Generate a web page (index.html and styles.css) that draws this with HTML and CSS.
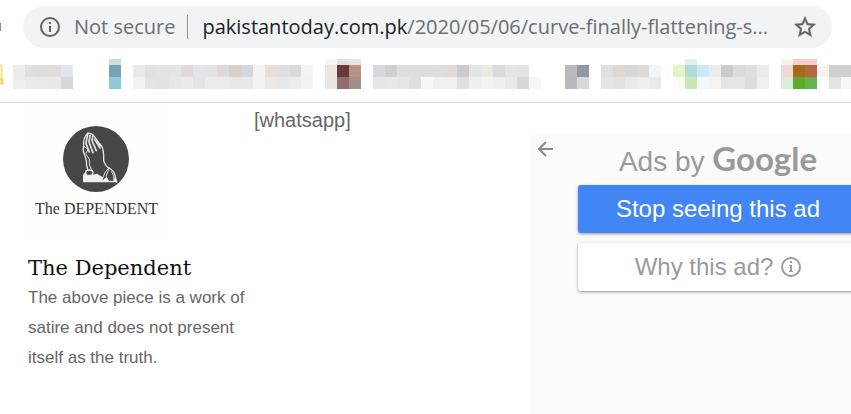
FILE: index.html
```html
<!DOCTYPE html>
<html lang="en">
  <head>
    <meta charset="UTF-8" />
    <meta name="viewport" content="width=device-width, initial-scale=1.0" />
    <title>The Dependent</title>
    <link rel="stylesheet" href="styles.css">
  </head>
  <body>
    <header class="browser">
      <div class="toolbar">
        <span class="edge"></span>
        <div class="omnibox">
          <button class="security" type="button">
            <svg width="22" height="22" viewBox="0 0 22 22" aria-hidden="true">
              <circle cx="11" cy="11" r="9" fill="none" stroke="#5f6368" stroke-width="2" />
              <path d="M10 10h2v6h-2zM10 6h2v2h-2z" fill="#5f6368" />
            </svg>
            Not secure
          </button>
          <div class="url" role="textbox" aria-label="Address" contenteditable="true" spellcheck="false"><span class="host">pakistantoday.com.pk</span>/2020/05/06/curve-finally-flattening-s...</div>
          <button class="star" type="button" aria-label="Bookmark this page">
            <svg width="26" height="26" viewBox="0 0 24 24" aria-hidden="true">
              <path d="M22 9.24l-7.19-.62L12 2 9.19 8.63 2 9.24l5.46 4.73L5.82 21 12 17.27 18.18 21l-1.63-7.03L22 9.24zM12 15.4l-3.76 2.27 1-4.28-3.32-2.88 4.38-.38L12 6.1l1.71 4.04 4.38.38-3.32 2.88 1 4.28L12 15.4z" fill="#5f6368" stroke="#5f6368" stroke-width=".3" />
            </svg>
          </button>
        </div>
      </div>
      <nav class="bookmarks" aria-label="Bookmarks">
        <svg class="folder" width="4" height="30" viewBox="0 0 4 30" aria-hidden="true">
          <path d="M0 6h2v16H0" fill="#fff3c4" stroke="#f9d56e" />
          <path d="M0 20h3v5H0" fill="#fbe28e" stroke="#f6c945" />
        </svg>
      </nav>
    </header>

    <main class="page">
      <section class="author">
        <svg class="logo" width="135" height="135" viewBox="0 0 135 135" role="img" aria-label="The Dependent">
          <rect width="135" height="135" fill="#fefefe" />
          <circle cx="68" cy="54" r="33" fill="#474747" />
          <g transform="translate(27 15) scale(.3333)" fill="none" stroke="#e4e4e4" stroke-width="4" stroke-linecap="round" stroke-linejoin="round">
            <path d="M84 187v-22l10-13 12 14 20-5 16 10 41 4v12z" fill="#f0f0f0" stroke="none" />
            <path d="M98 40q-14 14-12 36-4 16 3 28l5 18q0 16 4 26l14 16" />
            <path d="M98 40q12-2 20 10l23 31q5 8 5 24v18q8 18 16 21 15 8 18 22l5 20" />
            <path d="M98 44l-5 26 10 26M105 46l-3 20 12 32M113 50l-2 12 13 30M119 58l16 26M126 65l12 12" stroke-width="5" />
            <path d="M88 80l11 8-6 12M94 104l9 13v16l8 20" stroke-width="3" />
            <path d="M141 183q7-30 22-40l-10 26 8 15h16q2-18-7-29" fill="#474747" stroke-width="3" />
            <ellipse cx="103" cy="158" rx="11" ry="8" fill="#474747" stroke-width="4" />
          </g>
          <text x="7" y="109" class="logo-text">The DEPENDENT</text>
        </svg>
        <h2>The Dependent</h2>
        <p>The above piece is a work of satire and does not present itself as the truth.</p>
      </section>

      <section class="share">[whatsapp]</section>

      <aside class="ad">
        <button class="back" type="button" aria-label="Back">
          <svg width="16" height="16" viewBox="0 0 16 16" aria-hidden="true">
            <path d="M15 8H2M8 1L1 8l7 7" fill="none" stroke="#8a8a8a" stroke-width="2" />
          </svg>
        </button>
        <div class="ad-body">
          <div class="ad-title">Ads by <span class="google">Google</span></div>
          <button class="ad-button stop" type="button">Stop seeing this ad</button>
          <button class="ad-button why" type="button">
            Why this ad?
            <svg width="20" height="20" viewBox="0 0 20 20" aria-hidden="true">
              <circle cx="10" cy="10" r="9" fill="none" stroke="#9a9a9f" stroke-width="2" />
              <path d="M8 8h3v6h1v1H8v-1h1V9H8zM9 4h2v2H9z" fill="#9a9a9f" />
            </svg>
          </button>
        </div>
      </aside>
    </main>

    <script>
      // each bookmark: three rows of cells (short top row, then two full rows), "-" is empty
      const bookmarks = [
        ["", "eeecec e0dfde dedddc dfdcda e3e6e9 - -", "efeeee ebe9ea ebeaea eae9e8 d8d8d8 - -"],
        ["cfdde1", "78a3b5", "91c9da"],
        [
          "",
          "ebe9e9 e1e1e2 e3e3e3 e4e4e4 dfdbd8 e2e5eb e4e4e6 dfdadb d8d0cd d2d6df f2f2f4 e9dfda dddfe3 d8dade f2f3f5",
          "f2f2f2 e3e3e3 e2e2e2 e7e7e7 eaeaea e1e4e8 ececed ebebec e8e8e9 e8e8e9 f2f2f2 ebe8e5 e5e9ec ebebeb f1f2f4",
        ],
        ["f7f5f4 e3dfde e8e4e2", "ece5e0 6b3838 b89385", "ebe6e2 926d70 a18f89"],
        [
          "",
          "d8d7db d0ced1 dedddf dedede dfddde dfddde e0dbd9 cccacf e4e5e8 ebe8e4 dadade e5e4e7 e4e4e8 - -",
          "e6e6e7 e8e8e8 e6e6e6 dfdfe1 f8f8f8 f0f0f1 f0f0f0 dfdfe2 f0efef f5f4f2 efeff0 e9e9e9 d8d8da f7f7f8 -",
        ],
        ["", "b9babe 92999e", "b8b8bf d6d9dd"],
        ["", "e0e0e1 dbd8d5 d9d7d6 dddbda f2f5f5", "e6e5e5 e3e1e0 eae9e8 efeeee eaeaea"],
        [
          "- e5edf0 - - - - - -",
          "e4f3c8 b3d9d8 c7ebfa ebebeb cbcbcd dbdbdc dfdfe1 ebebed",
          "f8fcf2 c5e9b0 f0fafd f5f4f2 e5e5e7 e6e5e6 dddde1 f0f0f2",
        ],
        ["fbeff0 f5cccd f5cccd - - -", "f1d8d1 a56a1a af6a43 f4f3f3 cfcfd0 cfcfd0", "d9efdc 5cac2c 66b150 - e3e3e5 f6f6f7"],
      ];
      const rowTop = [0, 6, 18];
      const nav = document.querySelector(".bookmarks");
      bookmarks.forEach(function (rows, index) {
        const width = rows[1].split(" ").length * 12;
        let rects = "";
        rows.forEach(function (row, r) {
          row.split(" ").forEach(function (color, c) {
            if (color === "" || color === "-") return;
            rects += `<rect x="${c * 12}" y="${rowTop[r]}" width="12" height="${r === 0 ? 6 : 12}" fill="#${color}" />`;
          });
        });
        const link = document.createElement("a");
        link.href = "#";
        link.setAttribute("aria-label", "Bookmark " + (index + 1));
        link.innerHTML = `<svg width="${width}" height="30" shape-rendering="crispEdges">${rects}</svg>`;
        nav.append(link);
      });
    </script>
  </body>
</html>
```
FILE: styles.css
```css
* {
  margin: 0;
  padding: 0;
  box-sizing: border-box;
}
body {
  display: flex;
  flex-direction: column;
  min-height: 100vh;
  background: #fff;
  color: #666;
  font-family: "Liberation Sans", Arial, sans-serif;
  overflow-x: hidden;
}
button {
  border: 0;
  background: none;
  font: inherit;
  color: inherit;
  cursor: pointer;
}
svg {
  display: block;
  flex: none;
}

/* browser bars */
.browser {
  padding: 6px 0 13px;
  border-bottom: 1px solid #d9dadc;
}
.toolbar {
  display: flex;
  align-items: center;
  gap: 22px;
  padding-right: 19px;
}
.edge {
  width: 1px;
  height: 8px;
  background: #8a8d91;
}
.omnibox {
  display: flex;
  flex: 1;
  align-items: center;
  min-width: 0;
  height: 42px;
  padding: 0 14px 0 16px;
  border-radius: 21px;
  background: #f1f3f4;
  color: #6b6e72;
  font-family: "Open Sans", "Noto Sans", sans-serif;
  font-size: 20px;
}
.security {
  display: flex;
  align-items: center;
  gap: 13px;
  padding-right: 12px;
  border-right: 1px solid #8f9296;
  line-height: 24px;
  white-space: nowrap;
}
.url {
  flex: 1;
  min-width: 0;
  margin-left: 14px;
  line-height: 30px;
  white-space: nowrap;
  outline: none;
}
.host {
  color: #202124;
}
.bookmarks {
  display: flex;
  gap: 12px;
  margin-top: 11px;
  overflow: hidden;
}
.folder {
  margin-right: -3px;
}

/* article footer */
.page {
  display: grid;
  flex: 1;
  grid-template-columns: 226fr 277fr 320fr;
  padding: 2px 0 0 28px;
}
.logo-text {
  fill: #333;
  font-family: "Liberation Serif", serif;
  font-size: 16px;
}
.author h2 {
  margin-top: 13px;
  color: #111;
  font-family: "DejaVu Serif", serif;
  font-size: 21px;
  font-weight: 400;
  line-height: 30px;
}
.author p {
  font-size: 17px;
  line-height: 30px;
}
.share {
  font-size: 20px;
  line-height: 30px;
}

/* ad feedback */
.ad {
  display: flex;
  gap: 24px;
  align-items: flex-start;
  min-width: 0;
  margin-top: 30px;
  padding: 6px 0 0 7px;
  background: #fafafa;
  overflow: hidden;
}
.ad-body {
  display: flex;
  flex: none;
  flex-direction: column;
  gap: 10px;
  width: 280px;
}
.ad-title {
  height: 34px;
  color: #999;
  font-size: 28px;
  line-height: 34px;
  text-align: center;
}
.google {
  font-family: Lato, sans-serif;
  font-size: 33px;
  font-weight: 700;
}
.ad-button {
  display: flex;
  align-items: center;
  justify-content: center;
  gap: 8px;
  height: 48px;
  border-radius: 3px;
  font-size: 24px;
  box-shadow: 0 1px 3px rgba(0, 0, 0, 0.4);
}
.stop {
  background: #4285f4;
  color: #fff;
}
.why {
  background: #fff;
  color: #9a9a9f;
}
```
